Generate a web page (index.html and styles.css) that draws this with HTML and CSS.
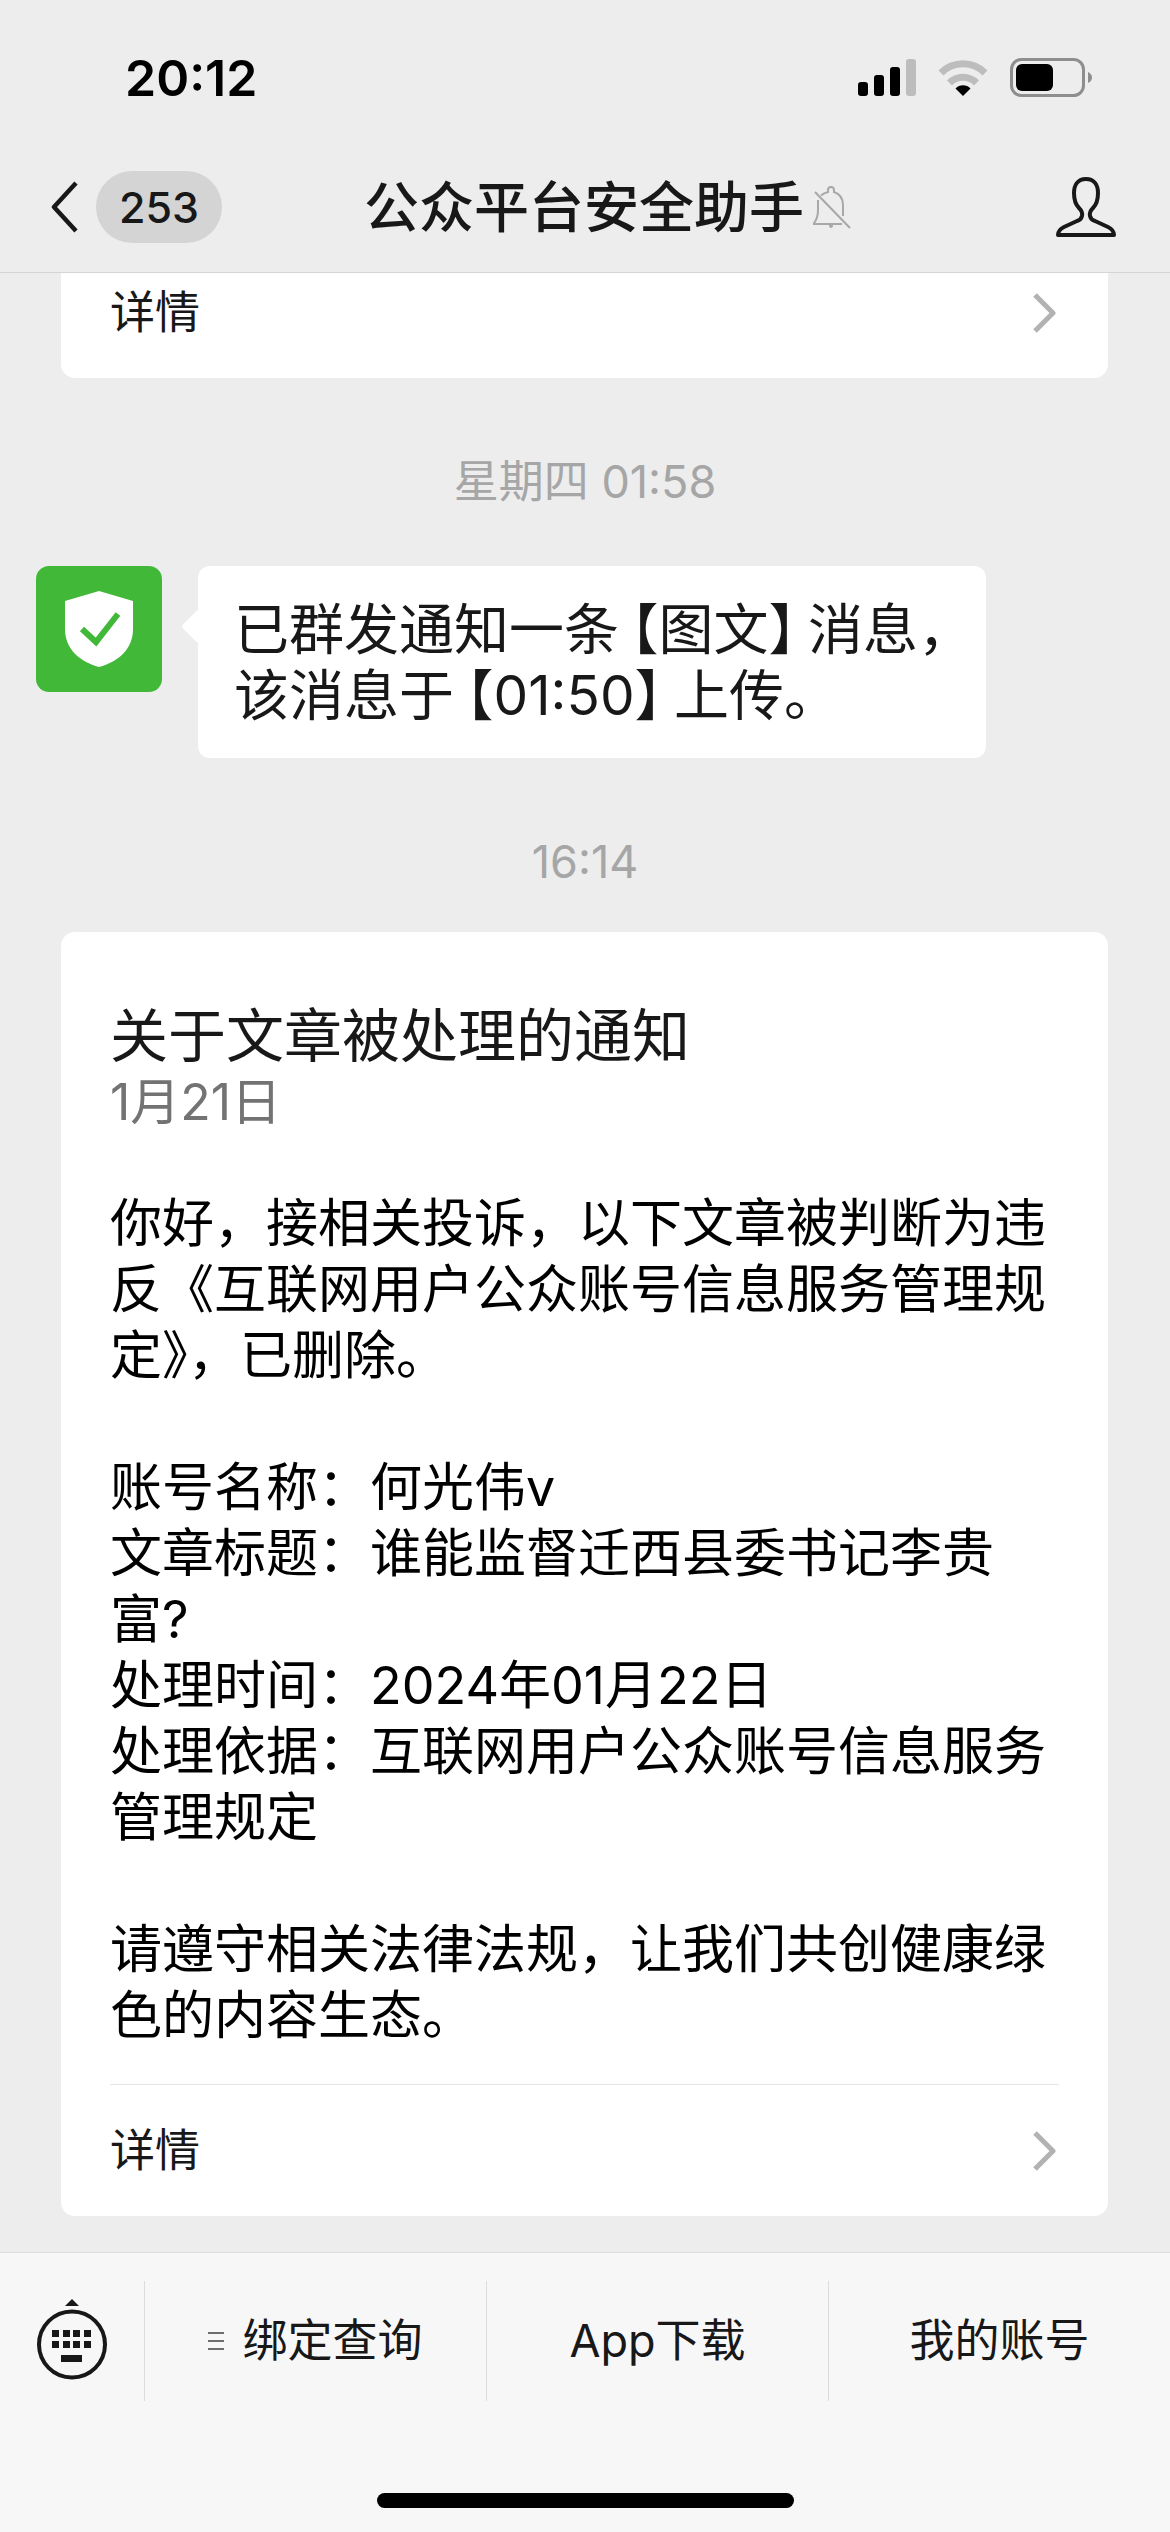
FILE: index.html
```html
<!DOCTYPE html>
<html lang="zh-CN">
<head>
<meta charset="utf-8">
<meta name="viewport" content="width=device-width">
<title>公众平台安全助手</title>
<link rel="stylesheet" href="styles.css">
</head>
<body>
<header class="top">
  <div class="status">
    <span class="clock">20:12</span>
    <div class="status-icons">
      <svg width="58" height="38" viewBox="0 0 58 38" aria-hidden="true">
        <rect x="0" y="23" width="10" height="14" rx="3"/>
        <rect x="16" y="16" width="10" height="21" rx="3"/>
        <rect x="32" y="8" width="10" height="29" rx="3"/>
        <rect x="48" y="0" width="10" height="37" rx="3" fill="#bdbdbd"/>
      </svg>
      <svg width="50" height="38" viewBox="0 0 50 38" aria-hidden="true">
        <path d="M3 14A31 31 0 0 1 47 14" fill="none" stroke="#bdbdbd" stroke-width="7"/>
        <path d="M11.500 24A19 19 0 0 1 38.500 24" fill="none" stroke="#bdbdbd" stroke-width="7"/>
        <path d="M17.500 29.500A10.500 10.500 0 0 1 32.500 29.500L25 37Z"/>
      </svg>
      <svg width="83" height="40" viewBox="0 0 83 40" aria-hidden="true">
        <rect x="1.500" y="1.500" width="72" height="36" rx="10" fill="none" stroke="#8e8e8e" stroke-width="3"/>
        <rect x="6" y="6" width="37" height="27" rx="6"/>
        <path d="M78 14Q82 16 82 19.500Q82 23 78 25Z" fill="#8e8e8e"/>
      </svg>
    </div>
  </div>
  <div class="nav">
    <button class="back" aria-label="返回">
      <svg width="28" height="52" viewBox="0 0 28 52" aria-hidden="true"><path d="M25 2L3 26L25 50" fill="none" stroke="#181818" stroke-width="4.500" stroke-linejoin="round"/></svg>
      <span class="unread">253</span>
    </button>
    <h1 class="nav-title">公众平台安全助手</h1>
    <div class="nav-end">
      <svg width="40" height="44" viewBox="0 0 40 44" fill="none" stroke="#a8a8a8" stroke-width="2" aria-hidden="true">
        <path d="M9 10.500Q12 8 16 7V5Q16 2 19 2Q22 2 22 5V7Q31 10 31 20V31M6 15V25Q6 33 2 38V39H30"/>
        <path d="M3 7L38 43"/>
        <path d="M17 40Q17 43 19 43Q21 43 21 40Z" fill="#a8a8a8" stroke="none"/>
      </svg>
      <button aria-label="账号资料">
        <svg width="62" height="60" viewBox="0 0 62 60" aria-hidden="true"><path d="M31 2C22 2 19 9 19 16C19 23 21 28 24 31Q28 35 27 39Q26 43 22 44L9 50Q3 53 3 58H59Q59 53 53 50L40 44Q36 43 35 39Q34 35 38 31C41 28 43 23 43 16C43 9 40 2 31 2Z" fill="none" stroke="#181818" stroke-width="4" stroke-linejoin="round"/></svg>
      </button>
    </div>
  </div>
</header>

<main class="chat">
  <section class="card card-tail">
    <a class="detail" href="#detail">详情
      <svg width="24" height="40" viewBox="0 0 24 40" aria-hidden="true"><path d="M3 2L21 20L3 38" fill="none" stroke="#b2b2b2" stroke-width="5" stroke-linejoin="round"/></svg>
    </a>
  </section>

  <time class="stamp">星期四 01:58</time>

  <div class="message">
    <svg class="avatar" width="126" height="126" viewBox="0 0 126 126" role="img" aria-label="安全助手">
      <rect width="126" height="126" rx="13" fill="#41b837"/>
      <path d="M63 25L97 35V63C97 83 82 96 63 101C44 96 29 83 29 63V35Z" fill="#fff"/>
      <path d="M46 63L60 76L82 48" fill="none" stroke="#41b837" stroke-width="6"/>
    </svg>
    <p class="bubble">已群发通知一条<span class="open">【</span>图文<span class="close">】</span>消息，<br>该消息于<span class="open">【</span>01:50<span class="close">】</span>上传。</p>
  </div>

  <time class="stamp">16:14</time>

  <article class="card notice">
    <h2 class="notice-title">关于文章被处理的通知</h2>
    <p class="notice-date">1月21日</p>
    <div class="notice-body">
      <p>你好，接相关投诉，以下文章被判断为违反《互联网用户公众账号信息服务管理规定》，已删除。</p>
      <p>账号名称：何光伟v<br>文章标题：谁能监督迁西县委书记李贵富?<br>处理时间：2024年01月22日<br>处理依据：互联网用户公众账号信息服务管理规定</p>
      <p>请遵守相关法律法规，让我们共创健康绿色的内容生态。</p>
    </div>
    <a class="detail ruled" href="#notice">详情
      <svg width="24" height="40" viewBox="0 0 24 40" aria-hidden="true"><path d="M3 2L21 20L3 38" fill="none" stroke="#b2b2b2" stroke-width="5" stroke-linejoin="round"/></svg>
    </a>
  </article>
</main>

<footer class="bottom">
  <nav class="menu">
    <button class="keyboard" aria-label="键盘">
      <svg width="72" height="84" viewBox="0 0 72 84" fill="#181818" aria-hidden="true">
        <path d="M36 0L43 7H29Z"/>
        <circle cx="36" cy="45.500" r="33" fill="none" stroke="#181818" stroke-width="4"/>
        <path d="M16 31h7v7h-7zM27 31h7v7h-7zM37 31h7v7h-7zM48 31h7v7h-7zM16 42h7v7h-7zM27 42h7v7h-7zM37 42h7v7h-7zM48 42h7v7h-7zM25 56h21v7H25z"/>
      </svg>
    </button>
    <button class="item">
      <svg width="16" height="18" viewBox="0 0 16 18" aria-hidden="true"><path d="M0 1H16M0 9H16M0 17H16" stroke="#6e6e6e" stroke-width="2"/></svg>
      绑定查询
    </button>
    <button class="item">App下载</button>
    <button class="item">我的账号</button>
  </nav>
  <div class="home"></div>
</footer>
</body>
</html>
```
FILE: styles.css
```css
* {
  box-sizing: border-box;
}

body {
  margin: 0;
  min-height: 100vh;
  display: flex;
  flex-direction: column;
  background: #ededed;
  color: #181818;
  font-family: Inter, "Noto Sans CJK SC", sans-serif;
  line-height: 66px;
}

h1, h2, p {
  margin: 0;
  font-weight: 400;
}

button {
  border: 0;
  padding: 0;
  background: none;
  color: inherit;
  font: inherit;
}

a {
  color: inherit;
  text-decoration: none;
}

svg {
  display: block;
  flex: none;
}

/* Status bar and navigation */
.top {
  border-bottom: 1px solid #d5d5d5;
}

.status {
  display: flex;
  justify-content: space-between;
  align-items: center;
  height: 156px;
  padding: 0 77px 0 125px;
  color: #000;
}

.clock {
  font-size: 50px;
  font-weight: 600;
}

.status-icons {
  display: flex;
  align-items: center;
  gap: 22px;
}

.nav {
  display: grid;
  grid-template-columns: 1fr auto 1fr;
  align-items: center;
  height: 116px;
  padding: 0 53px 14px 51px;
}

.back {
  display: flex;
  align-items: center;
  gap: 17px;
}

.unread {
  padding: 0 23px;
  border-radius: 36px;
  background: #d4d4d4;
  font-size: 43px;
  font-weight: 500;
  line-height: 72px;
}

.nav-title {
  font-size: 55px;
  font-weight: 500;
}

.nav-end {
  display: flex;
  justify-content: space-between;
  align-items: center;
  padding-left: 8px;
}

/* Conversation */
.chat {
  flex: 1;
  display: flex;
  flex-direction: column;
  padding-bottom: 35px;
}

.card {
  margin: 0 62px 0 61px;
  padding: 0 49px;
  border-radius: 14px;
  background: #fff;
}

.card-tail {
  padding-bottom: 26px;
  border-radius: 0 0 14px 14px;
}

.detail {
  display: flex;
  justify-content: space-between;
  align-items: center;
  height: 79px;
  padding-right: 3px;
  font-size: 45px;
}

.ruled {
  height: 132px;
  border-top: 1px solid #e5e5e5;
}

.stamp {
  margin-top: 71px;
  color: #a6a6a6;
  font-size: 45px;
  text-align: center;
}

.message {
  display: flex;
  align-items: flex-start;
  gap: 36px;
  margin-top: 51px;
  padding: 0 36px;
}

.bubble {
  position: relative;
  padding: 30px 13px 30px 36px;
  border-radius: 12px;
  background: #fff;
  font-size: 55px;
  white-space: nowrap;
}

.bubble::before {
  content: "";
  position: absolute;
  left: -12px;
  top: 48px;
  width: 25px;
  height: 25px;
  border-radius: 4px;
  background: #fff;
  transform: rotate(45deg);
}

.open,
.close {
  font-feature-settings: "halt";
}

.open {
  padding-left: 12px;
}

.close {
  padding-right: 12px;
}

.notice {
  margin-top: 37px;
  padding-top: 71px;
}

.notice-title {
  font-size: 58px;
}

.notice-date {
  color: #737373;
  font-size: 50px;
}

.notice-body {
  display: grid;
  gap: 66px;
  padding: 56px 0 35px;
  color: #000;
  font-size: 52px;
}

/* Account menu */
.bottom {
  border-top: 1px solid #dcdcdc;
  background: #f7f7f7;
}

.menu {
  display: grid;
  grid-template-columns: 144px repeat(3, 1fr);
  height: 148px;
  padding-top: 28px;
}

.keyboard,
.item {
  display: flex;
  justify-content: center;
  align-items: center;
}

.item {
  gap: 18px;
  border-left: 1px solid #dcdcdc;
  font-size: 45px;
}

.home {
  width: 417px;
  height: 15px;
  margin: 92px auto 24px;
  border-radius: 8px;
  background: #000;
}
```
